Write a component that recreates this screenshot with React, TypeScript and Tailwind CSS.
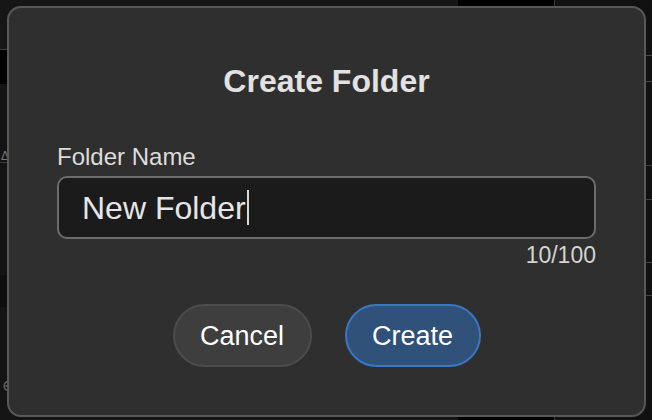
import React from "react";

export default function App() {
  const font = { fontFamily: '"Liberation Sans", Arial, Helvetica, sans-serif' };
  return (
    <div className="relative w-[652px] h-[420px] overflow-hidden bg-[#141414]" style={font}>
      {/* background app (behind modal) */}
      <div className="flex h-full w-full">
        <div className="flex w-[458px] flex-col">
          <div className="h-[49px] bg-[#161616]" />
          <div className="h-px bg-[#3e3e3e]" />
          <div className="h-[34px] bg-black" />
          <div className="mt-[66px] flex h-[13px] items-end border-b border-[#3a3a3a] pl-[1px] text-[12px] leading-none text-[#777]">Δ</div>
          <div className="mt-[112px] h-[32px] bg-[#0e0e0e]" />
          <div className="mt-[71px] pl-[2px] text-[16px] leading-none text-[#666]">⊖</div>
          <div className="flex-1" />
        </div>
        <div className="w-[97px] border-r border-[#3a3a3a] bg-black" />
        <div className="flex flex-1 flex-col bg-[#111]">
          <div className="mt-[55px] h-[27px] border-y border-[#4a4a4a]" />
          <div className="mt-[83px] h-[35px] border-y border-[#3e3e3e]" />
          <div className="mt-[62px] h-[34px] rounded-l-full border border-r-0 border-[#444]" />
        </div>
      </div>

      {/* modal dialog */}
      <div className="absolute left-[7px] top-[6px] flex h-[411px] w-[639px] flex-col rounded-[14px] border-2 border-[#585858] bg-[#2f2f2f] px-[48px]">
        <h1 className="mt-[57px] text-center text-[32px] font-bold leading-none text-[#e2e2e2]">Create Folder</h1>
        <label className="mt-[48px] text-[24px] leading-none text-[#dddddd]">Folder Name</label>
        <div className="mt-[7px] flex h-[63px] items-center rounded-[10px] border-2 border-[#6c6c6c] bg-[#1b1b1b] pl-[23px]">
          <span className="text-[32px] leading-none text-[#e6e6e6]">New Folder</span>
          <span className="ml-[1px] inline-block h-[35px] w-[2px] bg-[#d8d8d8]" />
        </div>
        <div className="mt-[5px] text-right text-[23px] leading-none text-[#d4d4d4]">10/100</div>
        <div className="mt-[37px] flex justify-center gap-[33px]">
          <button className="flex h-[63px] w-[139px] items-center justify-center rounded-full border-2 border-[#4c4c4c] bg-[#3e3e3e] pt-[2px] text-[27px] text-white">
            Cancel
          </button>
          <button className="flex h-[63px] w-[136px] items-center justify-center rounded-full border-2 border-[#3a76c4] bg-[#30517a] pt-[2px] text-[27px] text-white">
            Create
          </button>
        </div>
      </div>
    </div>
  );
}
